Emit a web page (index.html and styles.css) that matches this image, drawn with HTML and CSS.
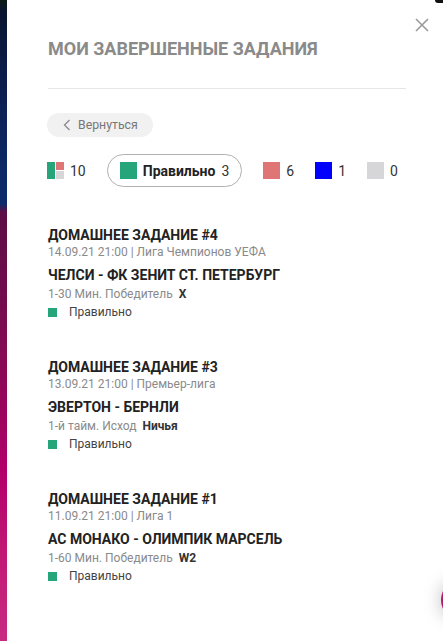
FILE: index.html
```html
<!DOCTYPE html>
<html lang="ru">
<head>
    <meta charset="UTF-8">
    <meta name="viewport" content="width=device-width, initial-scale=1.0">
    <title>Мои завершенные задания</title>
    <link rel="stylesheet" href="styles.css">
</head>
<body>

<div class="page">
    <div class="modal">
        <button class="close-button" aria-label="Закрыть">
            <svg width="14" height="14" viewBox="0 0 14 14">
                <path d="M1 1L13 13M13 1L1 13" stroke="#9a9a9a" stroke-width="1.6" fill="none"/>
            </svg>
        </button>

        <h1 class="title">Мои завершенные задания</h1>
        <div class="divider"></div>

        <a href="#" class="back-button">
            <svg width="8" height="12" viewBox="0 0 8 12">
                <path d="M6.5 1L1.5 6L6.5 11" stroke="#8a8a8a" stroke-width="1.3" fill="none"/>
            </svg>
            Вернуться
        </a>

        <div class="filters">
            <div class="filter">
                <span class="mix-icon">
                    <span class="mix-left"></span>
                    <span class="mix-right">
                        <span class="mix-top"></span>
                        <span class="mix-bottom"></span>
                    </span>
                </span>
                <span>10</span>
            </div>
            <div class="filter active">
                <span class="square green"></span>
                <span class="filter-label">Правильно</span>
                <span>3</span>
            </div>
            <div class="filter">
                <span class="square red"></span>
                <span>6</span>
            </div>
            <div class="filter">
                <span class="square blue"></span>
                <span>1</span>
            </div>
            <div class="filter">
                <span class="square gray"></span>
                <span>0</span>
            </div>
        </div>

        <div class="task-list">
            <div class="task">
                <div class="task-title">Домашнее задание #4</div>
                <div class="task-meta">14.09.21 21:00 | Лига Чемпионов УЕФА</div>
                <div class="task-match">Челси - ФК Зенит Ст. Петербург</div>
                <div class="task-bet">1-30 Мин. Победитель <b>X</b></div>
                <div class="task-status"><span class="dot green"></span>Правильно</div>
            </div>
            <div class="task">
                <div class="task-title">Домашнее задание #3</div>
                <div class="task-meta">13.09.21 21:00 | Премьер-лига</div>
                <div class="task-match">Эвертон - Бернли</div>
                <div class="task-bet">1-й тайм. Исход <b>Ничья</b></div>
                <div class="task-status"><span class="dot green"></span>Правильно</div>
            </div>
            <div class="task">
                <div class="task-title">Домашнее задание #1</div>
                <div class="task-meta">11.09.21 21:00 | Лига 1</div>
                <div class="task-match">АС Монако - Олимпик Марсель</div>
                <div class="task-bet">1-60 Мин. Победитель <b>W2</b></div>
                <div class="task-status"><span class="dot green"></span>Правильно</div>
            </div>
        </div>
    </div>

    <div class="corner-shape"></div>
    <div class="float-button"></div>
</div>

</body>
</html>
```

FILE: styles.css
```css
body {
    font-family: Roboto, "Liberation Sans", Arial, sans-serif;
    margin: 0;
}

.page {
    position: relative;
    height: 641px;
    overflow: hidden;
    background: linear-gradient(to bottom,
        #0c1a14 0px, #081430 12px, #0a1e4c 80px, #0b2966 170px, #0b2a6a 204px,
        #5c0d45 212px, #720b4e 300px, #8e0858 380px, #b2006a 470px, #c21a76 560px, #c82a82 641px);
}

.modal {
    position: relative;
    margin-left: 7px;
    height: 641px;
    background-color: #fff;
    padding: 37px 37px 0 41px;
    box-sizing: border-box;
}

.close-button {
    position: absolute;
    top: 18px;
    right: 14px;
    padding: 0;
    border: none;
    background: none;
    line-height: 0;
}

.title {
    margin: 0;
    font-size: 18px;
    line-height: 24px;
    font-weight: bold;
    color: #8a8a8a;
    text-transform: uppercase;
}

.divider {
    margin-top: 27px;
    border-top: 1px solid #e6e6e6;
}


.back-button {
    display: inline-flex;
    align-items: center;
    gap: 7px;
    margin-top: 24px;
    margin-left: -1px;
    height: 24px;
    padding: 0 15px 0 16px;
    background-color: #f1f1f1;
    border-radius: 12px;
    color: #777;
    font-size: 12.3px;
    text-decoration: none;
}


.filters {
    display: flex;
    align-items: center;
    gap: 21px;
    margin-top: 17px;
    margin-left: -1px;
    font-size: 14px;
    color: #333;
}

.filter {
    display: flex;
    align-items: center;
    gap: 6px;
    height: 33px;
}

.filter.active {
    border: 1px solid #b0b0b0;
    border-radius: 17px;
    padding: 0 12px;
    height: 31px;
}

.filter-label {
    font-weight: bold;
    color: #222;
}

.square {
    width: 17px;
    height: 17px;
}

.mix-icon {
    display: flex;
    gap: 1px;
    width: 17px;
    height: 17px;
}

.mix-left {
    width: 8px;
    background-color: #27a57a;
}

.mix-right {
    display: flex;
    flex-direction: column;
    gap: 1px;
    width: 8px;
}

.mix-top,
.mix-bottom {
    flex: 1;
}

.mix-top {
    background-color: #e07575;
}

.mix-bottom {
    background-color: #d6d6d8;
}

.green { background-color: #27a57a; }
.red { background-color: #e07575; }
.blue { background-color: #0000fe; }
.gray { background-color: #d6d6d8; }


.task-list {
    margin-top: 39px;
}

.task {
    margin-bottom: 38px;
}

.task-title,
.task-match {
    font-size: 14px;
    line-height: 18px;
    font-weight: bold;
    color: #222;
    text-transform: uppercase;
}

.task-meta,
.task-bet,
.task-status {
    font-size: 12px;
    line-height: 16px;
    color: #8a8a8a;
}

.task-match {
    margin-top: 6px;
}

.task-bet {
    margin-top: 2px;
}

.task-bet b {
    margin-left: 3px;
    color: #333;
}

.task-status {
    display: flex;
    align-items: center;
    margin-top: 2px;
    color: #444;
}

.dot {
    width: 9px;
    height: 9px;
    margin-right: 12px;
}


.corner-shape {
    position: absolute;
    top: 0;
    right: 0;
    width: 8px;
    height: 3px;
    background-color: #111;
    border-bottom-left-radius: 6px;
}

.float-button {
    position: absolute;
    right: -38px;
    top: 580px;
    width: 40px;
    height: 40px;
    border-radius: 50%;
    background-color: #b0186e;
    box-shadow: 0 0 18px rgba(0, 0, 0, 0.25);
}
```
